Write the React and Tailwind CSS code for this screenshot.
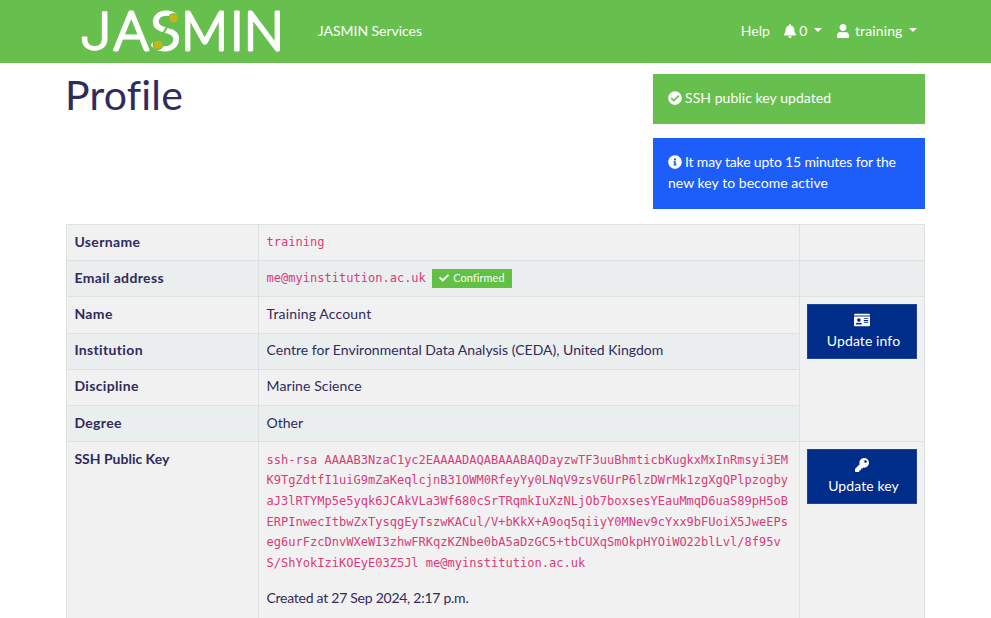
import { FaBell, FaUser, FaCheckCircle, FaInfoCircle, FaCheck, FaIdCard, FaKey } from "react-icons/fa";

function Logo() {
  return (
    <svg
      viewBox="60 0 610 187.5"
      className="h-[62.5px] w-[203.33px] shrink-0 overflow-visible fill-white stroke-white font-['Lato',sans-serif] font-light"
      fontSize="158"
      strokeWidth="8.5"
      strokeLinejoin="round"
      role="img"
      aria-label="JASMIN"
    >
      <text x="58" y="151" fontSize="157" strokeWidth="4" textLength="98" lengthAdjust="spacingAndGlyphs" className="font-['Inter',sans-serif] font-light">J</text>
      <text x="161" y="151" textLength="105" lengthAdjust="spacingAndGlyphs">A</text>
      <text x="270" y="151" textLength="92" lengthAdjust="spacingAndGlyphs">S</text>
      <circle cx="341" cy="55" r="16" className="fill-[#67c04d] stroke-none" />
      <circle cx="294" cy="134" r="16" className="fill-[#67c04d] stroke-none" />
      <line x1="306" y1="106" x2="324" y2="76" strokeWidth="6" className="stroke-[#67c04d]" />
      <circle cx="341" cy="55" r="12" className="fill-[#c2b70c] stroke-none" />
      <circle cx="294" cy="134" r="12" className="fill-[#c2b70c] stroke-none" />
      <text x="364" y="151" textLength="140" lengthAdjust="spacingAndGlyphs">M</text>
      <text x="510" y="151">I</text>
      <text x="551" y="151" textLength="121" lengthAdjust="spacingAndGlyphs">N</text>
    </svg>
  );
}

function Caret() {
  return <span className="-mt-0.5 h-0 w-0 border-x-[4.3px] border-t-[4.3px] border-x-transparent border-t-white" />;
}

function Label({ children, alt }) {
  return (
    <div className={`border-b border-r border-[#dce1e2] pl-[7.4px] pt-[6.7px] font-bold tracking-[0.35px] ${alt ? "bg-[#eaeeef]" : "bg-[#f1f1f1]"}`}>
      {children}
    </div>
  );
}

function Value({ children, alt }) {
  return (
    <div className={`border-b border-r border-[#dce1e2] pl-[7.5px] pt-[6.7px] ${alt ? "bg-[#eaeeef]" : "bg-[#f1f1f1]"}`}>
      {children}
    </div>
  );
}

function ActionButton({ icon, children }) {
  return (
    <button className="flex h-[54.5px] w-[110px] flex-col items-center border border-[#1c4490] bg-[#002d89] pt-[6px] text-white">
      <span className="flex h-[18px] items-center">{icon}</span>
      <span className="ml-[3px] mt-[2px] tracking-[0.1px]">{children}</span>
    </button>
  );
}

const KEY_LINES = [
  "ssh-rsa AAAAB3NzaC1yc2EAAAADAQABAAABAQDayzwTF3uuBhmticbKugkxMxInRmsyi3EM",
  "K9TgZdtfI1uiG9mZaKeqlcjnB31OWM0RfeyYy0LNqV9zsV6UrP6lzDWrMk1zgXgQPlpzogby",
  "aJ3lRTYMp5e5yqk6JCAkVLa3Wf680cSrTRqmkIuXzNLjOb7boxsesYEauMmqD6uaS89pH5oB",
  "ERPInwecItbwZxTysqgEyTszwKACul/V+bKkX+A9oq5qiiyY0MNev9cYxx9bFUoiX5JweEPs",
  "eg6urFzcDnvWXeWI3zhwFRKqzKZNbe0bA5aDzGC5+tbCUXqSmOkpHYOiWO22blLvl/8f95v",
  "S/ShYokIziKOEyE03Z5Jl me@myinstitution.ac.uk",
];

export default function App() {
  return (
    <div className="h-[618px] w-[991px] overflow-hidden bg-white font-['Lato',sans-serif] text-[14px] leading-[20.7px] text-[#2f2b5b]">
      <header className="flex h-[62.5px] items-center bg-[#67c04d] pl-20 pr-[74px] text-white">
        <Logo />
        <a className="ml-[34.5px] tracking-[-0.04px]">JASMIN Services</a>
        <nav className="ml-auto flex items-center">
          <a>Help</a>
          <span className="ml-[13.5px] flex items-center"><FaBell size={14} /><span className="ml-[2px] mr-[6.5px]">0</span><Caret /></span>
          <span className="ml-[14px] flex items-center"><FaUser size={14} /><span className="ml-[5px] mr-[6.5px] tracking-[0.12px]">training</span><Caret /></span>
        </nav>
      </header>
      <main className="pl-[66px]">
        <div className="flex h-[161.5px] w-[859px] justify-between">
          <h1 className="-ml-px mt-[8.5px] text-[41px] leading-[48px] tracking-[0.2px]">Profile</h1>
          <div className="flex w-[272px] flex-col gap-[14.5px] pt-[11px]">
            <div className="h-[50px] bg-[#67c04d] px-[15px] pt-[14px] tracking-[0.06px] text-white">
              <FaCheckCircle size={14} className="mr-[3px] inline-block align-[-2px]" />
              SSH public key updated
            </div>
            <div className="h-[71px] bg-[#1d5dfa] px-[15px] pt-[14px] tracking-[-0.16px] text-white">
              <FaInfoCircle size={14} className="mr-[3px] inline-block align-[-2px]" />
              It may take upto 15 minutes for the<br /><span className="tracking-[0.04px]">new key to become active</span>
            </div>
          </div>
        </div>
        <div className="grid w-[859px] grid-cols-[192px_541px_125px] grid-rows-[36.2px_36.2px_36.2px_36.2px_36.2px_36.2px_230px] border-l border-t border-[#dce1e2]">
          <Label>Username</Label>
          <Value><code className="block font-['DejaVu_Sans_Mono',monospace] text-[12.04px] text-[#d93a7c]">training</code></Value>
          <Value />
          <Label alt>Email address</Label>
          <Value alt>
            <div className="flex items-center">
              <code className="font-['DejaVu_Sans_Mono',monospace] text-[12.04px] text-[#d93a7c]">me@myinstitution.ac.uk</code>
              <span className="ml-[6px] flex h-[19px] w-20 items-center justify-center gap-[4px] bg-[#60c144] text-[10.8px] tracking-[0.15px] text-white"><FaCheck size={10} />Confirmed</span>
            </div>
          </Value>
          <Value alt />
          <Label>Name</Label>
          <Value><span className="tracking-[0.16px]">Training Account</span></Value>
          <div className="row-span-4 border-b border-r border-[#dce1e2] bg-[#f1f1f1] pl-[7px] pt-[7px]">
            <ActionButton icon={<FaIdCard size={16} />}>Update info</ActionButton>
          </div>
          <Label alt>Institution</Label>
          <Value alt><span className="tracking-[0.02px]">Centre for Environmental Data Analysis (CEDA), United Kingdom</span></Value>
          <Label>Discipline</Label>
          <Value><span className="tracking-[0.1px]">Marine Science</span></Value>
          <Label alt>Degree</Label>
          <Value alt>Other</Value>
          <div className="border-b border-r border-[#dce1e2] bg-[#f1f1f1] pl-[7.4px] pt-[6.7px] font-bold">SSH Public Key</div>
          <Value>
            <code className="block whitespace-pre pt-[0.8px] font-['DejaVu_Sans_Mono',monospace] text-[12.04px] text-[#d93a7c]">{KEY_LINES.join("\n")}</code>
            <p className="mt-[13.8px] tracking-[-0.26px]">Created at 27 Sep 2024, 2:17 p.m.</p>
          </Value>
          <div className="border-b border-r border-[#dce1e2] bg-[#f1f1f1] pl-[7px] pt-[7px]">
            <ActionButton icon={<FaKey size={14} />}>Update key</ActionButton>
          </div>
        </div>
      </main>
    </div>
  );
}
